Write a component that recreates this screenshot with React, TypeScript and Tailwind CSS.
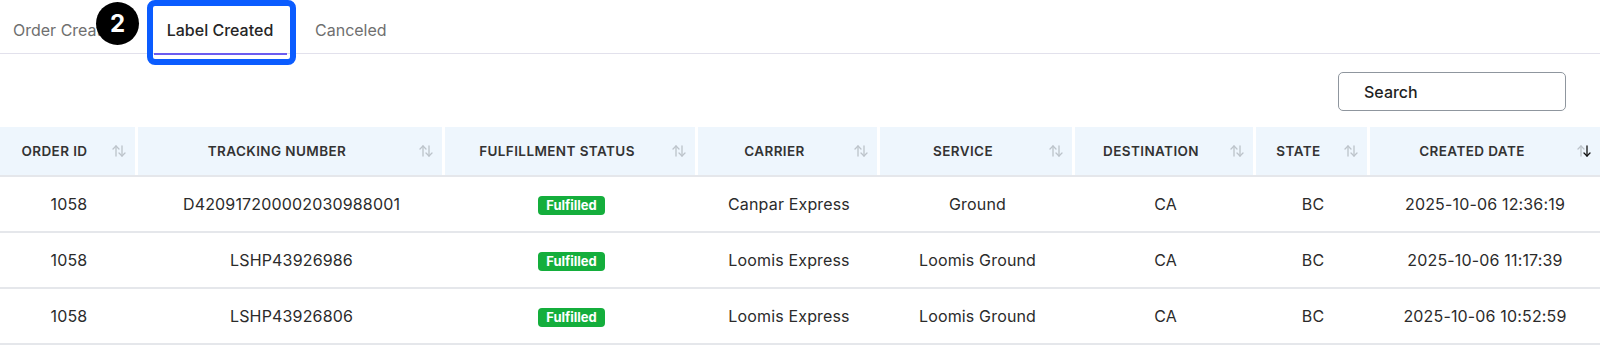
import { FC } from "react";

type Row = {
  orderId: string;
  tracking: string;
  status: string;
  carrier: string;
  service: string;
  destination: string;
  state: string;
  created: string;
};

const rows: Row[] = [
  {
    orderId: "1058",
    tracking: "D420917200002030988001",
    status: "Fulfilled",
    carrier: "Canpar Express",
    service: "Ground",
    destination: "CA",
    state: "BC",
    created: "2025-10-06 12:36:19",
  },
  {
    orderId: "1058",
    tracking: "LSHP43926986",
    status: "Fulfilled",
    carrier: "Loomis Express",
    service: "Loomis Ground",
    destination: "CA",
    state: "BC",
    created: "2025-10-06 11:17:39",
  },
  {
    orderId: "1058",
    tracking: "LSHP43926806",
    status: "Fulfilled",
    carrier: "Loomis Express",
    service: "Loomis Ground",
    destination: "CA",
    state: "BC",
    created: "2025-10-06 10:52:59",
  },
];

const columns = [
  "Order ID",
  "Tracking Number",
  "Fulfillment Status",
  "Carrier",
  "Service",
  "Destination",
  "State",
  "Created Date",
];

// same template for header and body so the cells line up
const gridCols =
  "grid grid-cols-[138px_307px_253px_182px_195px_181px_114px_1fr]";

const App = () => {
  return (
    <div className="w-[1600px] h-[347px] overflow-hidden bg-white font-['Inter',_'Noto_Sans',_sans-serif] text-[#2b2b2b]">
      {/* Tabs */}
      <div className="relative">
        <div className="flex h-[54px] items-stretch border-b border-[#e2e1ec]">
          <Tab text="Order Created" className="w-[152px] pl-[13px]" />
          <Tab text="Label Created" className="w-[136px] justify-center" active />
          <Tab text="Canceled" className="pl-[27px]" />
        </div>

        {/* annotation overlay */}
        <div className="absolute left-[147px] top-0 w-[149px] h-[65px] rounded-[8px] border-[6px] border-[#0b5cff]" />
        <div className="absolute left-[96px] top-[2px] w-[43px] h-[43px] rounded-full bg-black text-white flex items-center justify-center text-[24px] font-bold">
          2
        </div>
      </div>

      {/* Toolbar */}
      <div className="flex justify-end pt-[18px] pb-[16px] pr-[34px]">
        <input
          placeholder="Search"
          className="w-[228px] h-[39px] rounded-[5px] border border-[#8f969e] pl-[25px] text-[16px] font-medium outline-none placeholder:text-[#1f1f1f]"
        />
      </div>

      {/* Table */}
      <div>
        <div className={`${gridCols} h-[50px] border-b-2 border-[#e5e7eb]`}>
          {columns.map((col, i) => (
            <HeaderCell
              key={col}
              label={col}
              last={i === columns.length - 1}
            />
          ))}
        </div>
        {rows.map((row) => (
          <div
            key={row.created}
            className={`${gridCols} h-[56px] border-b-2 border-[#e5e7eb] text-[16px] tracking-[0.01em] items-center text-center`}
          >
            <div>{row.orderId}</div>
            <div>{row.tracking}</div>
            <div>
              <span className="inline-block rounded-[4px] bg-[#14ae3c] px-[8px] text-[13px] font-bold text-white leading-[19px] tracking-normal">
                {row.status}
              </span>
            </div>
            <div>{row.carrier}</div>
            <div>{row.service}</div>
            <div>{row.destination}</div>
            <div>{row.state}</div>
            <div>{row.created}</div>
          </div>
        ))}
      </div>
    </div>
  );
};

export default App;

/**********************
 * Components
 */
const Tab: FC<{ text: string; className: string; active?: boolean }> = ({
  text,
  className,
  active,
}) => (
  <div
    className={`relative flex items-center pt-[7px] text-[16px] ${
      active ? "font-medium text-[#262626]" : "text-[#6f6f6f]"
    } ${className}`}
  >
    {text}
    {active && (
      <span className="absolute left-[2px] right-[1px] -bottom-[2px] h-[2px] bg-[#6c5cf0]" />
    )}
  </div>
);

const HeaderCell: FC<{ label: string; last?: boolean }> = ({ label, last }) => (
  <div
    className={`flex items-center bg-[#eef6fd] pl-[8px] pr-[8px] ${
      last ? "" : "border-r-[3px] border-white"
    }`}
  >
    <span className="flex-1 text-center text-[13.5px] font-semibold uppercase tracking-[0.03em] text-[#333]">
      {label}
    </span>
    <SortIcon active={last} />
  </div>
);

const SortIcon: FC<{ active?: boolean }> = ({ active }) => (
  <svg
    width="16"
    height="14"
    viewBox="0 0 16 14"
    fill="none"
    strokeWidth="1.3"
    strokeLinecap="round"
    strokeLinejoin="round"
    className="ml-[10px] shrink-0"
  >
    <g stroke="#bcc3ca">
      <path d="M5 12V2" />
      <path d="M2 5l3-3 3 3" />
    </g>
    <g stroke={active ? "#111111" : "#bcc3ca"}>
      <path d="M11 2v10" />
      <path d="M8 9l3 3 3-3" />
    </g>
  </svg>
);
